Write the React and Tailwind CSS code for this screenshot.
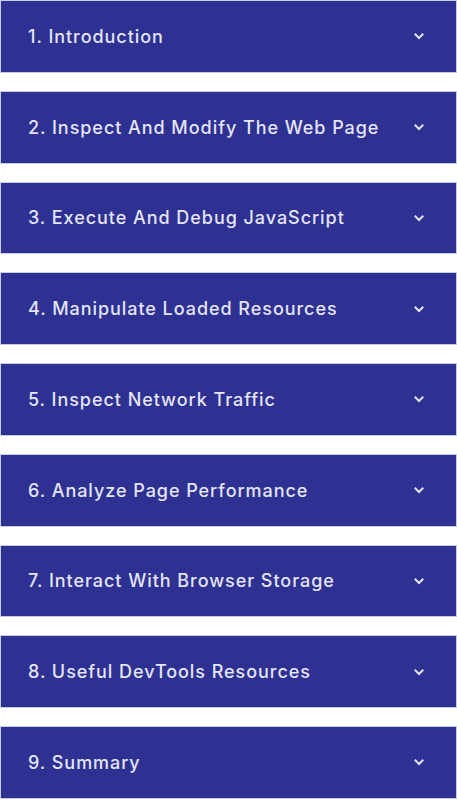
import React from "react";

const items = [
  "1. Introduction",
  "2. Inspect And Modify The Web Page",
  "3. Execute And Debug JavaScript",
  "4. Manipulate Loaded Resources",
  "5. Inspect Network Traffic",
  "6. Analyze Page Performance",
  "7. Interact With Browser Storage",
  "8. Useful DevTools Resources",
  "9. Summary",
];

function Chevron() {
  return (
    <svg width="12" height="12" viewBox="0 0 12 12" fill="none" className="shrink-0">
      <path d="M2.5 4.5 L6 8 L9.5 4.5" stroke="#e4e4f7" strokeWidth="2" strokeLinecap="square" />
    </svg>
  );
}

export default function App() {
  return (
    <div className="w-[457px] bg-white flex flex-col gap-[18px]" style={{ fontFamily: "Inter, 'Noto Sans', sans-serif" }}>
      {items.map((t) => (
        <div
          key={t}
          className="h-[72.75px] bg-[#2e3191] border border-[#c9cbe3] flex items-center justify-between pl-[27px] pr-[31px]"
        >
          <span className="text-[18px] font-medium text-[#e4e4f7] tracking-[0.95px]">{t}</span>
          <Chevron />
        </div>
      ))}
    </div>
  );
}
